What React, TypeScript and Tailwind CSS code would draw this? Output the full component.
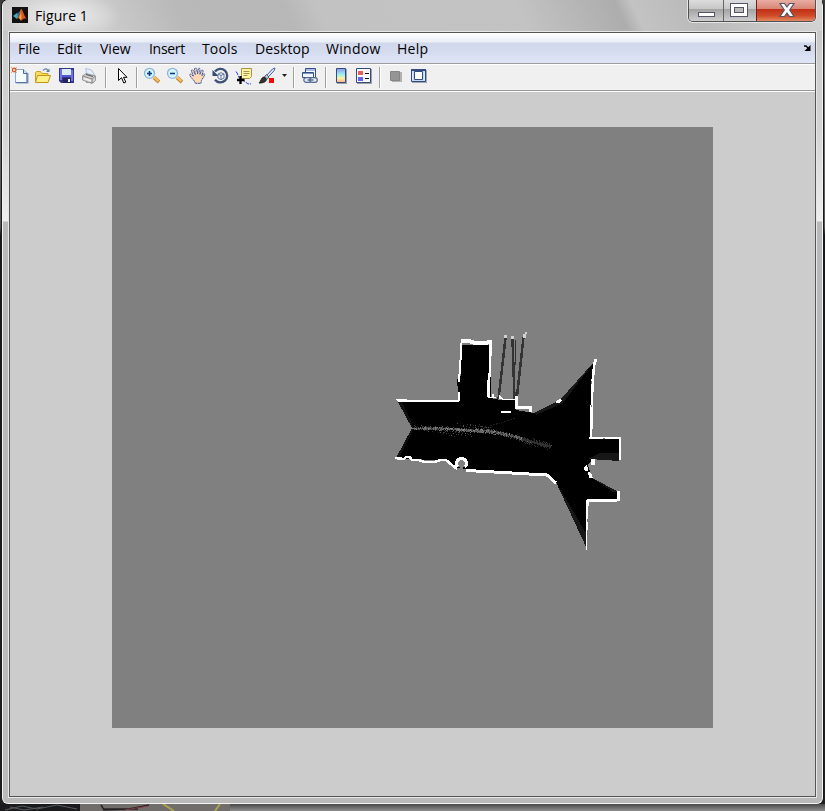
import type { ReactNode } from "react";

const MENU: [string, string][] = [
  ["File", "w-[39px]"],
  ["Edit", "w-[43px]"],
  ["View", "w-[49px]"],
  ["Insert", "w-[53px] tracking-[-0.3px]"],
  ["Tools", "w-[53px] tracking-[0.15px]"],
  ["Desktop", "w-[71px] tracking-[0.1px]"],
  ["Window", "w-[71px] tracking-[0.3px]"],
  ["Help", "w-[40px] tracking-[0.3px]"],
];

function Icon({ className = "", w = 18, children }: { className?: string; w?: number; children: ReactNode }) {
  return (
    <svg width={w} height="18" viewBox={`0 0 ${w} 18`} className={`block shrink-0 ${className}`} fill="none">
      {children}
    </svg>
  );
}

function Separator({ className = "" }: { className?: string }) {
  return <div className={`h-[21px] w-[2px] shrink-0 border-l border-[#a0a0a0] bg-white ${className}`} />;
}

function Magnifier({ plus }: { plus?: boolean }) {
  return (
    <Icon className="ml-[5px]">
      <path d="M11 10.5 16 15" stroke="#bd8a3c" strokeWidth="3.8" />
      <path d="M11 10 15.500 14" stroke="#f7b95a" strokeWidth="2.400" />
      <circle cx="6.5" cy="6.3" r="5" fill="#d2f6fc" stroke="#8fb4dc" strokeWidth="1.3" />
      <path d="M4 6.500h5" stroke="#123c84" strokeWidth="1.600" />
      {plus && <path d="M6.500 4v5" stroke="#123c84" strokeWidth="1.600" />}
    </Icon>
  );
}

function Toolbar() {
  return (
    <div className="flex h-[25px] items-start bg-[#f0f0f0] pl-[2px] pt-[2px]">
      <Icon className="-ml-[1px]">
        <path d="M5.5 3.5h8l4 3v10h-12z" fill="#8598b8" />
        <path d="M4.500 2.500h8l3.500 3.500v9.500H4.500z" fill="#f4faff" stroke="#8fa8cc" />
        <path d="M4.500 15.500H16V6" stroke="#5675a8" />
        <path d="M12.500 2.500v4H16" fill="#cfe0f6" stroke="#4667a1" />
        <path d="M0 0 6 6M6 0 0 6" stroke="#e9ac89" />
        <circle cx="3.2" cy="3" r="1.8" fill="#f7d9b4" stroke="#da5222" strokeWidth="1.2" />
      </Icon>
      <Icon className="ml-[5px]">
        <path d="M1.500 14.500V5.500l1-1h4l1.500 2h6v8z" fill="#f9dd61" stroke="#caa02b" />
        <path d="M1.500 15.500l2-7h13l-2.500 7z" fill="#fff08a" stroke="#c49514" />
        <path d="M9 3.500c2-2.500 4-2 5.500.500" stroke="#5f7fab" strokeWidth="1.200" />
        <path d="m15.500 1.500v3.500H12z" fill="#5f7fab" />
      </Icon>
      <Icon className="ml-[6px]">
        <path d="M1 1h15v15H3l-2-2z" fill="#35358f" />
        <path d="M2 2h2v11H2zM13 3h2v11h-2z" fill="#6f74e0" />
        <path d="M4 2h9v6H4z" fill="#dcecfc" />
        <path d="M4 8h9v2H4z" fill="#5558ce" />
        <path d="M5 11h8v5H5z" fill="#26265f" />
        <path d="M10 12h2v3h-2z" fill="#f1f2ff" />
      </Icon>
      <Icon className="ml-[5px]">
        <path d="M4.500 1.500l6 1.500 3 5-7 1z" fill="#e1efff" stroke="#b3c0d8" />
        <path d="M1.500 9 5 6.500 14.500 9v4.500L11 16.500 1.500 13z" fill="#d0d0d0" stroke="#9a9a9a" />
        <path d="M1.500 9 11 12l3.500-3M11 12v4" stroke="#888" />
        <path d="m5 7.500 7 2" stroke="#5a5a5a" strokeWidth="1.300" />
        <path d="M3 11.500l7 2.200" stroke="#f6f6f6" strokeWidth="1.500" />
        <path d="M5 15.500h8" stroke="#999" />
      </Icon>
      <Separator className="ml-[6px]" />
      <Icon className="ml-[10px]" w={12}>
        <path d="M1.500 1.500v12l3-2.800 2.300 5.300 2-.9-2.300-4.800H10z" fill="white" stroke="#000" />
      </Icon>
      <Separator className="ml-[7px]" />
      <Magnifier plus />
      <Magnifier />
      <Icon className="ml-[5px]">
        <path d="M6.200 16.300c-.2-2-1.800-3.300-3.300-5L.8 8.500c-.7-1.300.9-1.900 1.900-.8L4.500 9.300 2.400 4c-.2-1.300 1.300-1.700 1.900-.4l2 4-.8-5.500c0-1.500 1.700-1.500 2 0L8.700 7l.4-5c.3-1.300 1.800-1 1.800.4L11 7.300l1.500-3.600c.6-1.200 2-.6 1.600.8l-1.300 4.300 1.500-1.600c.9-.8 2 0 1.300 1.100l-3.200 5.200-.5 2.800z" fill="#ffd9b6" stroke="#3854a1" strokeDasharray="2 .5" />
      </Icon>
      <Icon className="ml-[5px]">
        <path d="M3 4.500A6.800 6.800 0 1 1 3 12.800" stroke="#3d5078" strokeWidth="2.300" />
        <path d="M.5 3v6h6z" fill="#344a71" />
        <path d="M6 7 9 5.700 12 7v4l-3 1.700L6 11zM6 7l3 1.500L12 7M9 8.500v4" fill="#f3f6ff" stroke="#63759d" />
      </Icon>
      <Icon className="ml-[5px]" w={19}>
        <path d="M6.500 1.500h10v8l-2 2h-8z" fill="#fff3a5" stroke="#a59843" />
        <path d="M8.500 4.500h6M8.500 6.500h6M8.500 8.500h4" stroke="#a2974f" />
        <path d="M1 4.500c2 2 2 5 4 7.300 2 2.200 4 1.200 6 3.500s3 1.200 5 1.700" stroke="#2434e0" strokeDasharray="4 1" />
        <path d="M5.500 9v8M2 13h7.500" stroke="#000" strokeWidth="2.300" />
      </Icon>
      <Icon className="ml-[4px]" w={19}>
        <path d="m8 9 6.500-7L17 1l-.8 2.600-6.500 7z" fill="#d6e4ff" stroke="#5361a3" />
        <path d="m6.500 9.500 2-2L11 10l-1.600 2z" fill="#b7c7d6" stroke="#53606c" />
        <path d="M1 16c2-1.500 2-5.500 5-6l2.500 2.500C8 15.500 4 16 1 16z" fill="#333" stroke="#222" />
        <path d="M11 11h5v5h-5z" fill="#fb0505" />
      </Icon>
      <Icon className="ml-[4px]" w={7}><path d="M1 7h5L3.500 10z" fill="#202020" /></Icon>
      <Separator className="ml-[5px]" />
      <Icon className="ml-[6px]">
        <path d="M4.500 1.500h10v9h-10z" fill="#fff" stroke="#344e83" />
        <path d="M5 2h9v2H5z" fill="#a8bde8" />
        <path d="M12.500 5.500v5h-11v-5z" fill="#f1f7ff" stroke="#344e83" />
        <path d="M2 6h10v1H2z" fill="#7694cd" />
        <rect x="2.800" y="10.700" width="7.500" height="4.600" rx="2.300" fill="#e3e9f3" stroke="#526a91" strokeWidth="1.200" />
        <rect x="8.800" y="10.700" width="7.500" height="4.600" rx="2.300" fill="#e3e9f3" stroke="#526a91" strokeWidth="1.200" />
        <path d="M6.500 13h6" stroke="#40577f" strokeWidth="1.200" />
      </Icon>
      <Separator className="ml-[6px]" />
      <Icon className="ml-[8px]" w={14}>
        <defs><linearGradient id="bar" x1="0" y1="0" x2="0" y2="1"><stop stopColor="#8a99ef" /><stop offset=".45" stopColor="#a0f2ee" /><stop offset=".7" stopColor="#fff1a3" /><stop offset="1" stopColor="#faaa85" /></linearGradient></defs>
        <path d="M2 2h10v15H2z" fill="#9ca0a9" />
        <path d="M1.500 1.500h9v14h-9z" fill="url(#bar)" stroke="#334b7d" />
      </Icon>
      <Icon className="ml-[6px]">
        <path d="M2 2h15v15H2z" fill="#9ca0a9" />
        <path d="M1.500 1.500h14v14h-14z" fill="#f7f9ff" stroke="#334b7d" />
        <path d="M3 4h5v4H3z" fill="#e6605c" /><path d="M3 10h5v4H3z" fill="#6464e7" />
        <path d="M10 6.500h4M10 11.500h4" stroke="#111" />
      </Icon>
      <Separator className="ml-[6px]" />
      <Icon className="ml-[8px]" w={14}>
        <path d="M3 5h10v10H3z" fill="#b2b2b2" /><path d="M1.500 4.500h9v9h-9z" fill="#959595" stroke="#858585" />
      </Icon>
      <Icon className="ml-[7px]">
        <path d="M2 3h15v13H2z" fill="#a3a6af" />
        <path d="M1.500 2.500h14v12h-14z" fill="#c4daf6" stroke="#334b7d" />
        <path d="M1 2h15v2H1z" fill="#334b7d" />
        <path d="M4.500 4.500h8v8h-8z" fill="#fff" stroke="#334b7d" />
        <path d="M2.500 5v8M14.500 5v8" stroke="#dfeaff" />
      </Icon>
    </div>
  );
}

/* Deterministic speckle along the sensor's driving track. */
const track = [[414, 428], [430, 428], [450, 429], [470, 430], [490, 431], [510, 435], [530, 441], [550, 446]];
const specks = Array.from({ length: 900 }, (_, i) => {
  const a = (i * 0.618034) % 1;
  const f = a * (track.length - 1);
  const k = Math.floor(f);
  const x = track[k][0] + (track[k + 1][0] - track[k][0]) * (f - k);
  const y = track[k][1] + (track[k + 1][1] - track[k][1]) * (f - k);
  const b = (i * 0.754878) % 1;
  const c = (i * 0.569841) % 1;
  const core = i % 3 !== 0;
  const spread = core ? 2 : a > 0.6 ? 4 : 7;
  return {
    x: Math.round(x),
    y: Math.round(y + (b + c - 1) * spread * Math.min(1, 0.4 + a * 2)),
    c: core ? ["#808080", "#5c5c5c", "#6d6d6d", "#484848"][i % 4] : ["#333", "#555", "#262626", "#444"][i % 4],
    dim: a > 0.8,
  };
});

function OccupancyMap() {
  return (
    <svg className="block bg-[#808080]" width="601" height="601" viewBox="112 127 601 601" fill="none" shapeRendering="crispEdges">
      <path d="M398 402H458V392L457 379L461 376V345H491V398L500 400H516V410L534 413L560 400L595 361L591 437H619V460L593 459L588 465L592 478L619 492V501H588L587 549L555 480L548 475L470 470L454 467L447 461L396 458L412 428Z" fill="#000" />
      <path d="m534 413 26-13 34-38-31 41-27 12zM588 459l12-6 19 0v8l-29-2zM592 478l27 14h-6zM556 482l31 67v-14z" fill="#171717" />
      <path d="m398 402 14 26-16 30 3 0 15-30-12-26z" fill="#111" />
      <path d="m505.500 338-7 61M512.500 339l2 60M523.500 337l-7 64" stroke="#333" strokeWidth="2.500" />
      <path d="M515.500 340v25" stroke="#333" />
      <path d="M504 335h3v3h-3zM511 336h3v3h-3zM523 334h3v4h-3zM525 332h2v2h-2z" fill="#d0d0d0" />
      <path d="m396 399h10l1 1h52v2h-61z" fill="#fff" />
      <path d="m461.500 343-1 17-1 14-1 4v4M459 392v9" stroke="#fff" strokeWidth="2" />
      <path d="M490.500 343 490 372l-1.500 10v15" stroke="#fff" strokeWidth="2.500" />
      <path d="M488 397h4v-3h2v3l3 1h2v-3l4 4h12v-3h3v10h6l6 0h2v6h-3v-3h-14v-9h-12l-5-2h-10z" fill="#fff" />
      <path d="M461 341h8l6 2h8l9-1" stroke="#fff" strokeWidth="4" />
      <path d="M501 411h10v2h-10z" fill="#fff" />
      <path d="m395 458 9 1 2-2h4l2 3h7l5 2h11l5-2h6l6 5 5 4" stroke="#fff" strokeWidth="2.500" />
      <path d="M466 470l10 1 71 4 9 8" stroke="#fff" strokeWidth="3" />
      <path d="m594.500 362-2 20-1 34-.5 22" stroke="#fff" strokeWidth="2.600" />
      <path d="M589 437h32v23h-2v-21h-30zM617 491h3v10h-3v1h-28l-1 8-1 40h-1v-50l1-1h30z" fill="#fff" />
      <path d="M594 359h3v3h-3zM555 402l5-3 2 1-2 3h-4zM591 459h4v6h-4zM584 467l3-2 1 3 0 3h-3l-1-2zM588 472l3 1 2 5h-4z" fill="#fff" />
      <path d="M458 467a5 5 0 1 1 7 0" fill="#808080" stroke="#fff" strokeWidth="3" />
      <path d="m459 461h4v9h-3z" fill="#808080" />
      <path d="M591 381h1v3h-1zM591 405h1v2h-1zM603 438h2v1h-2zM587 519h1v3h-1zM587 533h1v2h-1z" fill="#747474" />
      <path d="M412 428h30" stroke="#777" strokeDasharray="3 1 2 2" />
      <path d="M426 429h26l38 2" stroke="#707070" strokeWidth="2" strokeDasharray="3 2 1 1" />
      <path d="m490 432 20 4 20 6 12 2M500 432l22 8 31 6" stroke="#5a5a5a" strokeDasharray="3 2 5 1" />
      <path d="M490 426l26-8" stroke="#1e1e1e" strokeDasharray="2 1" />
      {specks.map((s, i) => <rect key={i} x={s.x} y={s.y} width="1" height="1" fill={s.dim ? "#303030" : s.c} />)}
    </svg>
  );
}

function WindowButtons() {
  return (
    <div className="absolute left-[688px] top-0 flex h-[22px] w-[128px] overflow-hidden rounded-b-[5px] border border-t-0 border-[#515151] shadow-[0_0_0_1px_#e6e6e6]">
      <div className="flex w-[35px] items-end justify-center border-r border-[#666] bg-[linear-gradient(#ddd_0%,#c7c7c7_42%,#a2a2a2_43%,#cecece_100%)] pb-[4px]">
        <div className="h-[5px] w-[17px] border border-[#555568] bg-white" />
      </div>
      <div className="flex w-[33px] justify-center border-r border-[#761f13] bg-[linear-gradient(#ddd_0%,#c7c7c7_42%,#a2a2a2_43%,#cecece_100%)] pr-[2px] pt-[3px]">
        <div className="h-[14px] w-[18px] border border-[#555568] bg-white p-[3px]"><div className="h-full w-full border border-[#555568] bg-[#bbb]" /></div>
      </div>
      <div className="flex flex-1 justify-center bg-[linear-gradient(#e7ada2_0%,#d98575_42%,#bf2e16_43%,#d24b27_75%,#e18b62_100%)] pl-[2px] pt-[2px]">
        <svg width="18" height="17" viewBox="0 0 18 17"><path d="M2 1.500h4.500L9 5l2.500-3.500H16l-4.300 6.500L16 14.500h-4.500L9 11l-2.500 3.500H2L6.300 8z" fill="#fff" stroke="#555568" strokeWidth="1.200" /></svg>
      </div>
    </div>
  );
}

export default function App() {
  return (
    <div className="relative flex h-[811px] w-[825px] flex-col overflow-hidden bg-[linear-gradient(#3b3b3b,#777_9%,#555_28%,#17191c_29%,#202020)] font-['Open_Sans',sans-serif] text-black">
      <div className="ml-[2px] flex h-[804px] w-[821px] shrink-0 flex-col rounded-[6px] border border-t-0 border-[#f3f3f3] bg-[linear-gradient(#c0c0c0_0,#cecece_60px,#d2d2d2_125px,#eee_221px,#b9b9b9_222px,#bababa_100%)] shadow-[0_0_0_1px_#191919]">
        <header className="flex h-[31px] shrink-0 items-center rounded-tl-[6px] bg-[radial-gradient(ellipse_60px_24px_at_58px_16px,#e6e6e6_30%,#e6e6e600_100%),linear-gradient(65deg,#cdcdcd_0%,#cdcdcd_12%,#b9b9b9_22%,#b7b7b7_35%,#c2c2c2_39%,#c3c3c3_63%,#adadad_75%,#c3c3c3_77%,#bababa_84%,#d5d5d5_100%)] pl-[9px]">
          <svg width="16" height="16" viewBox="0 0 16 16" className="-mt-px">
            <path d="M0 0h16v16H0z" fill="#111" />
            <path d="m1 9 4-3 2 2-2 4z" fill="#43a9bf" />
            <path d="M5 6c3 0 3-4 5-4L6 11z" fill="#396888" />
            <path d="M9 2c2 0 3 8 6 10-3-1-4 0-6 2l-2-3-2 1c2-2 3-7 4-10z" fill="#d85525" />
            <path d="M9 3c0 4 1 8 0 10l-2-2c1-2 2-5 2-8z" fill="#f6ad3f" />
          </svg>
          <span className="ml-[7px] text-[14px] leading-[20px] tracking-[0.1px]">Figure 1</span>
        </header>
        <main className="mx-[5px] flex h-[767px] w-[809px] flex-col border border-[#e7e7e7]">
          <div className="flex h-[765px] flex-col border border-[#555] bg-[#ccc]">
            <nav className="flex h-[30px] shrink-0 items-center bg-[linear-gradient(#fff_0px,#e9edf6_9px,#d2d8eb_10px,#d5dbef_18px,#e0e6f7_30px)] pl-[8px] text-[14px] tracking-[0px]">
              {MENU.map(([label, width]) => <span key={label} className={`${width} whitespace-nowrap pt-[2px] leading-[20px]`}>{label}</span>)}
              <svg className="ml-auto mr-[4px]" width="8" height="8" viewBox="0 0 8 8"><path d="M1 2h2l3 3" fill="none" stroke="#000" strokeWidth="1.400" /><path d="M7.500 1v6h-6z" /></svg>
            </nav>
            <div className="shrink-0 border-t border-b border-t-[#9c9c9c] border-b-[#999]"><div className="border-t border-white"><Toolbar /></div></div>
            <div className="h-px shrink-0 bg-white" />
            <div className="pl-[102px] pt-[35px]"><OccupancyMap /></div>
          </div>
        </main>
      </div>
      <footer className="flex h-[7px] w-full">
        <svg width="230" height="7" viewBox="0 0 230 7" fill="none">
          <path d="M0 0h80v7H0z" fill="#1b1b1e" /><path d="M80 0h150v7H80z" fill="#716d6a" />
          <path d="m5 6 17-4 15 3 20-4 20 4M10 3l14 3 19-3" stroke="#555b5b" />
          <path d="m101 1 3 5 25-1 20-4M104 5h34" stroke="#252326" strokeWidth="1.500" />
          <path d="m125 6 23-4" stroke="#873d45" /><path d="m163 0 11 7M220 0l-5 7" stroke="#aaa34d" strokeWidth="2" />
        </svg>
        <div className="flex-1 bg-[linear-gradient(#484848,#8e8e8e)]" />
      </footer>
      <WindowButtons />
    </div>
  );
}
